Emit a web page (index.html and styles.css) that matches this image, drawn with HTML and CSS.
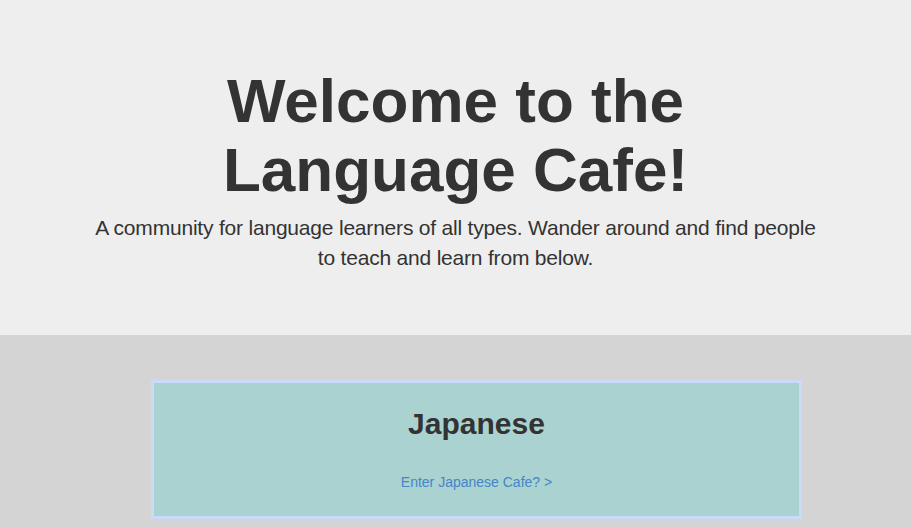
FILE: index.html
```html
<!DOCTYPE html>
<html lang="en">
<head>
<meta charset="utf-8">
<title>Language Cafe</title>
<link rel="stylesheet" href="styles.css">
</head>
<body>
<header class="hero">
  <div class="hero-inner">
    <h1 class="hero-title">Welcome to the<br>Language Cafe!</h1>
    <p class="hero-lead">A community for language learners of all types. Wander around and find people to teach and learn from below.</p>
  </div>
</header>
<main class="cafes">
  <section class="cafe-card">
    <h2 class="cafe-name">Japanese</h2>
    <a class="cafe-link" href="#">Enter Japanese Cafe? &gt;</a>
  </section>
</main>
</body>
</html>
```
FILE: styles.css
```css
html, body {
  margin: 0;
  padding: 0;
}
body {
  font-family: "Liberation Sans", Arial, Helvetica, sans-serif;
  color: #333333;
  background: #d4d4d4;
  font-size: 14px;
  line-height: 1.42857;
}
.hero {
  background: #eeeeee;
  padding: 46px 0 47px;
}
.hero-inner {
  width: 740px;
  margin: 0 auto;
  text-align: center;
}
.hero-title {
  margin: 20px 0 9px;
  font-size: 62px;
  line-height: 69px;
  font-weight: 700;
  color: #333333;
}
.hero-lead {
  margin: 0 0 15px;
  font-size: 21px;
  line-height: 30px;
  font-weight: 400;
  letter-spacing: -0.2px;
}
.cafes {
  padding: 45px 0 20px;
}
.cafe-card {
  box-sizing: border-box;
  width: 651px;
  margin-left: 151px;
  border: 3px solid #c9dafb;
  background: #a9d2d1;
  padding: 24px 0 24px;
  text-align: center;
}
.cafe-name {
  margin: 0 0 32px;
  font-size: 30px;
  line-height: 1.1;
  font-weight: 700;
  color: #333333;
}
.cafe-link {
  display: block;
  font-size: 14px;
  line-height: 20px;
  color: #4586c6;
  text-decoration: none;
}
```
